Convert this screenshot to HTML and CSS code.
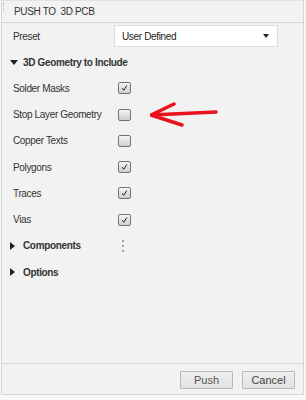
FILE: index.html
```html
<!DOCTYPE html>
<html lang="en">
<head>
    <meta charset="UTF-8">
    <title>Push to 3D PCB</title>
    <link rel="stylesheet" href="styles.css">
</head>
<body>
    <div class="panel">
        <div class="grip"></div>
        <div class="title">PUSH TO &nbsp;3D PCB</div>

        <div class="preset">
            <span class="label">Preset</span>
            <div class="select">
                <span>User Defined</span>
                <span class="caret"></span>
            </div>
        </div>

        <div class="group">
            <span class="tri down"></span>
            <span class="group-name">3D Geometry to Include</span>
        </div>

        <div class="row">
            <span class="label">Solder Masks</span>
            <span class="check"><svg viewBox="0 0 13 13"><path d="M3.5 6.8 L5.6 9.4 L9.6 3.2" /></svg></span>
        </div>
        <div class="row">
            <span class="label">Stop Layer Geometry</span>
            <span class="check"></span>
        </div>
        <div class="row">
            <span class="label">Copper Texts</span>
            <span class="check"></span>
        </div>
        <div class="row">
            <span class="label">Polygons</span>
            <span class="check"><svg viewBox="0 0 13 13"><path d="M3.5 6.8 L5.6 9.4 L9.6 3.2" /></svg></span>
        </div>
        <div class="row">
            <span class="label">Traces</span>
            <span class="check"><svg viewBox="0 0 13 13"><path d="M3.5 6.8 L5.6 9.4 L9.6 3.2" /></svg></span>
        </div>
        <div class="row">
            <span class="label">Vias</span>
            <span class="check"><svg viewBox="0 0 13 13"><path d="M3.5 6.8 L5.6 9.4 L9.6 3.2" /></svg></span>
        </div>

        <div class="group">
            <span class="tri"></span>
            <span class="group-name fixed">Components</span>
            <span class="more"><i></i><i></i><i></i></span>
        </div>
        <div class="group">
            <span class="tri"></span>
            <span class="group-name">Options</span>
        </div>

        <div class="spacer"></div>

        <div class="footer">
            <button class="btn push">Push</button>
            <button class="btn">Cancel</button>
        </div>

        <!-- red annotation arrow -->
        <svg class="arrow" width="80" height="30" viewBox="0 0 80 30">
            <path d="M66 11 L1 14 M24 3 L1 14 L32 24" />
        </svg>
    </div>
</body>
</html>
```

FILE: styles.css
```css
body {
    margin: 0;
    background: #f7f7f7;
    font-family: "Liberation Sans", Arial, sans-serif;
    font-size: 10px;
    letter-spacing: -0.35px;
    color: #333;
}

.panel {
    position: relative;
    box-sizing: border-box;
    width: 303px;
    height: 395px;
    margin: 0 0 0 1px;
    background: #f2f2f2;
    border: 1px solid #d6d6d6;
    border-top-color: #e2e2e2;
    display: flex;
    flex-direction: column;
}

.grip {
    position: absolute;
    left: 1px;
    top: 2px;
    width: 1px;
    height: 8px;
    border-left: 1px dotted #b8b8b8;
}

.title {
    height: 21px;
    line-height: 21px;
    padding-left: 12px;
    border-bottom: 1px solid #d4d4d4;
    color: #333;
}

.preset {
    height: 26px;
    display: flex;
    align-items: center;
    padding-left: 11px;
}

.preset .label {
    width: 101px;
}

.select {
    box-sizing: border-box;
    width: 164px;
    height: 22px;
    background: #fff;
    border: 1px solid #dcdcdc;
    display: flex;
    align-items: center;
    justify-content: space-between;
    padding: 0 8px 0 7px;
    color: #222;
}

.caret {
    width: 0;
    height: 0;
    border-left: 3px solid transparent;
    border-right: 3px solid transparent;
    border-top: 4px solid #222;
}

.group, .row {
    height: 26.25px;
    display: flex;
    align-items: center;
}

.group {
    padding-left: 8px;
}

.tri {
    width: 0;
    height: 0;
    border-top: 4px solid transparent;
    border-bottom: 4px solid transparent;
    border-left: 5px solid #222;
    margin: 0 8px 0 0;
}

.tri.down {
    border-left: 4px solid transparent;
    border-right: 4px solid transparent;
    border-top: 5px solid #222;
    border-bottom: 0;
    margin: 0 5px 0 0;
}

.group-name {
    font-weight: bold;
    color: #333;
    white-space: nowrap;
}

.group-name.fixed {
    width: 99px;
}

.more {
    display: flex;
    flex-direction: column;
    gap: 3px;
    margin-left: 0;
}

.more i {
    width: 2px;
    height: 2px;
    background: #a0a0a0;
}

.row {
    padding-left: 11px;
}

.row .label {
    width: 105px;
    color: #333;
}

.check {
    box-sizing: border-box;
    width: 13px;
    height: 12px;
    border: 1px solid #747474;
    border-radius: 2px;
    background: linear-gradient(#f6f6f6, #cdcdcd);
}

.check svg {
    display: block;
    width: 11px;
    height: 10px;
}

.check path {
    fill: none;
    stroke: #111;
    stroke-width: 1.2;
}

.spacer {
    flex: 1;
}

.footer {
    height: 31px;
    border-top: 1px solid #d6d6d6;
    display: flex;
    justify-content: flex-end;
    align-items: flex-start;
    gap: 9px;
    padding: 7px 8px 0 0;
    box-sizing: border-box;
}

.btn {
    height: 18px;
    width: 53px;
    padding: 0;
    font-family: "Liberation Sans", Arial, sans-serif;
    font-size: 11px;
    color: #444;
    background: linear-gradient(#efefef, #e2e2e2);
    border: 1px solid #b9b9b9;
    border-radius: 1px;
}

.btn.push {
    color: #555;
}

.arrow {
    position: absolute;
    left: 148px;
    top: 100px;
}

.arrow path {
    fill: none;
    stroke: #e8131c;
    stroke-width: 3.5;
    stroke-linecap: round;
    stroke-linejoin: round;
}
```
